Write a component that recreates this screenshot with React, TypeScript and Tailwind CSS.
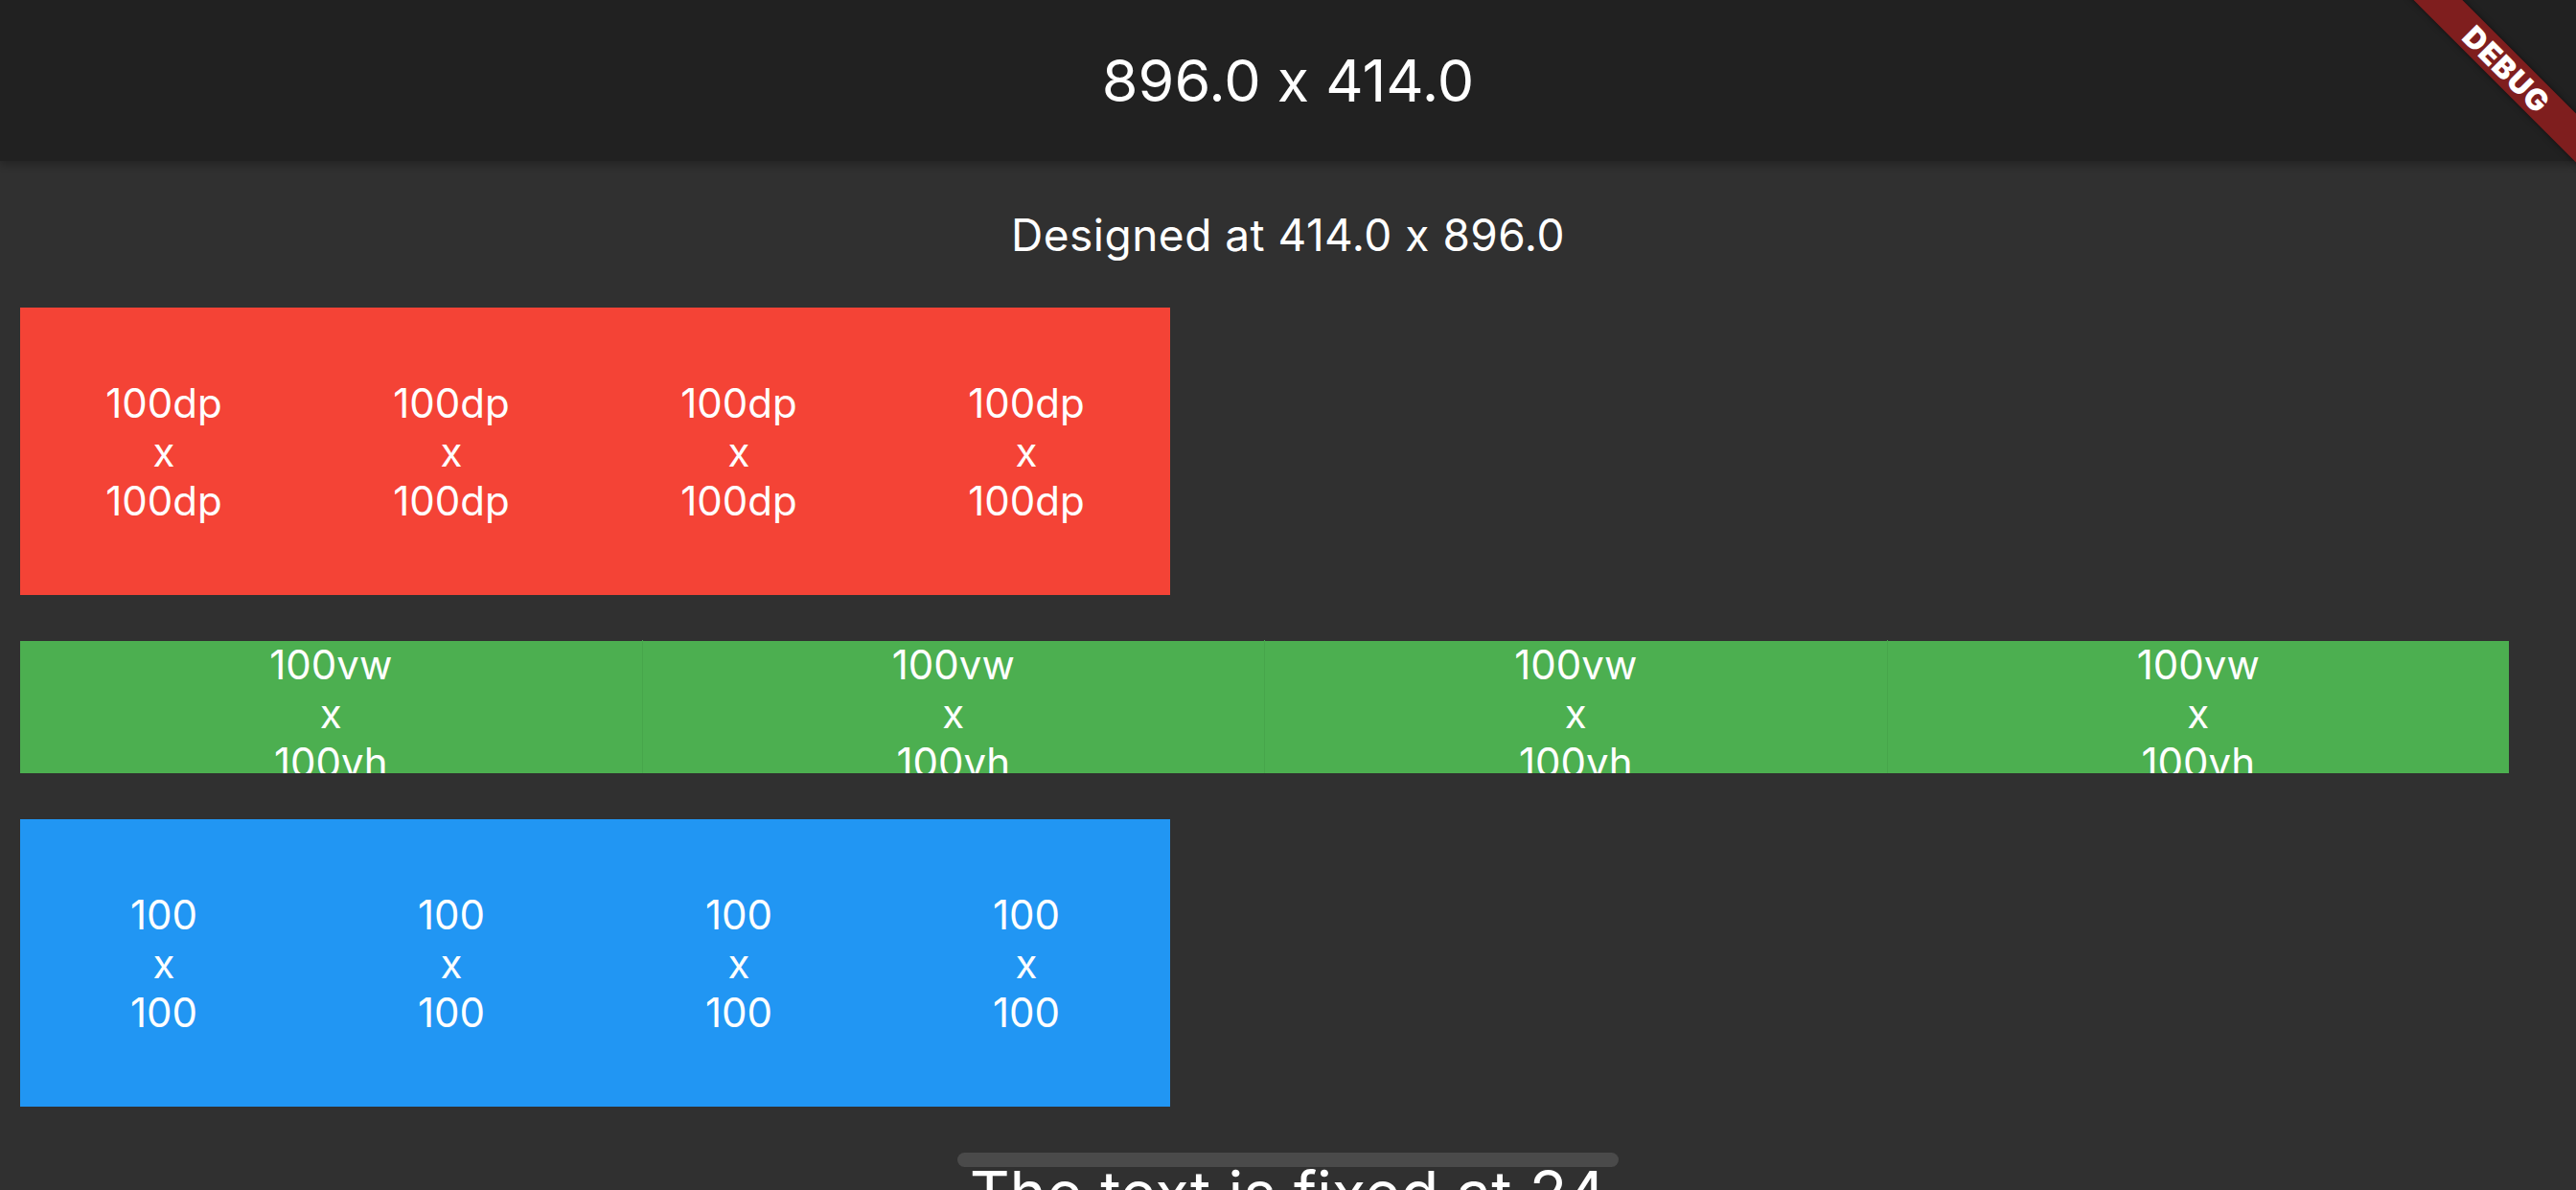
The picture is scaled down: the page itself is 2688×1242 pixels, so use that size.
import React from 'react';

const cells = [0, 1, 2, 3];

function BoxRow({ color, top, bottom }: { color: string; top: string; bottom: string }) {
  return (
    <div className="ml-[21px] flex">
      {cells.map((i) => (
        <div
          key={i}
          className={`w-[300px] h-[300px] ${color} flex flex-col items-center justify-center text-[42px] leading-[51px] text-white`}
        >
          <span>{top}</span>
          <span>x</span>
          <span>{bottom}</span>
        </div>
      ))}
    </div>
  );
}

function DebugBanner() {
  return (
    <div className="absolute z-20 top-0 right-0 w-[200px] h-[200px] overflow-hidden pointer-events-none">
      <div className="absolute left-[-22px] top-[54px] w-[300px] h-[36px] rotate-45 bg-[#7f1e1e] shadow-[0_0_6px_rgba(0,0,0,0.5)] flex items-center justify-center">
        <span className="text-white text-[31px] font-black tracking-[1px] leading-none">DEBUG</span>
      </div>
    </div>
  );
}

export default function App() {
  return (
    <div
      className="relative w-[2688px] h-[1242px] bg-[#303030] overflow-hidden text-white"
      style={{ fontFamily: 'Inter, "Noto Sans", sans-serif' }}
    >
      {/* app bar */}
      <div className="relative z-10 h-[168px] bg-[#212121] shadow-[0_4px_8px_rgba(0,0,0,0.25)] flex items-center justify-center">
        <span className="text-[61px] leading-none">896.0 x 414.0</span>
      </div>

      <div className="h-[153px] flex items-center justify-center">
        <span className="text-[46px] tracking-[0.5px] leading-none">Designed at 414.0 x 896.0</span>
      </div>

      {/* dp boxes */}
      <BoxRow color="bg-[#f44336]" top="100dp" bottom="100dp" />

      {/* vw x vh row */}
      <div className="ml-[21px] mt-[48px] w-[2597px] h-[138px] flex bg-[#4caf50]">
        {cells.map((i) => (
          <div
            key={i}
            className={`flex-1 overflow-hidden flex flex-col items-center text-[42px] leading-[51px] -mt-px ${i > 0 ? 'border-l border-[#47a64b]' : ''}`}
          >
            <span>100vw</span>
            <span>x</span>
            <span>100vh</span>
          </div>
        ))}
      </div>

      {/* plain boxes */}
      <div className="mt-[48px]">
        <BoxRow color="bg-[#2196f3]" top="100" bottom="100" />
      </div>

      {/* fixed text + scroll thumb */}
      <div className="relative mt-[48px] pt-[10px] flex justify-center">
        <div className="absolute top-0 left-[999px] w-[690px] h-[15px] rounded-full bg-[#4a4a4a]" />
        <span className="text-[65px] leading-none">The text is fixed at 24</span>
      </div>

      <DebugBanner />
    </div>
  );
}
